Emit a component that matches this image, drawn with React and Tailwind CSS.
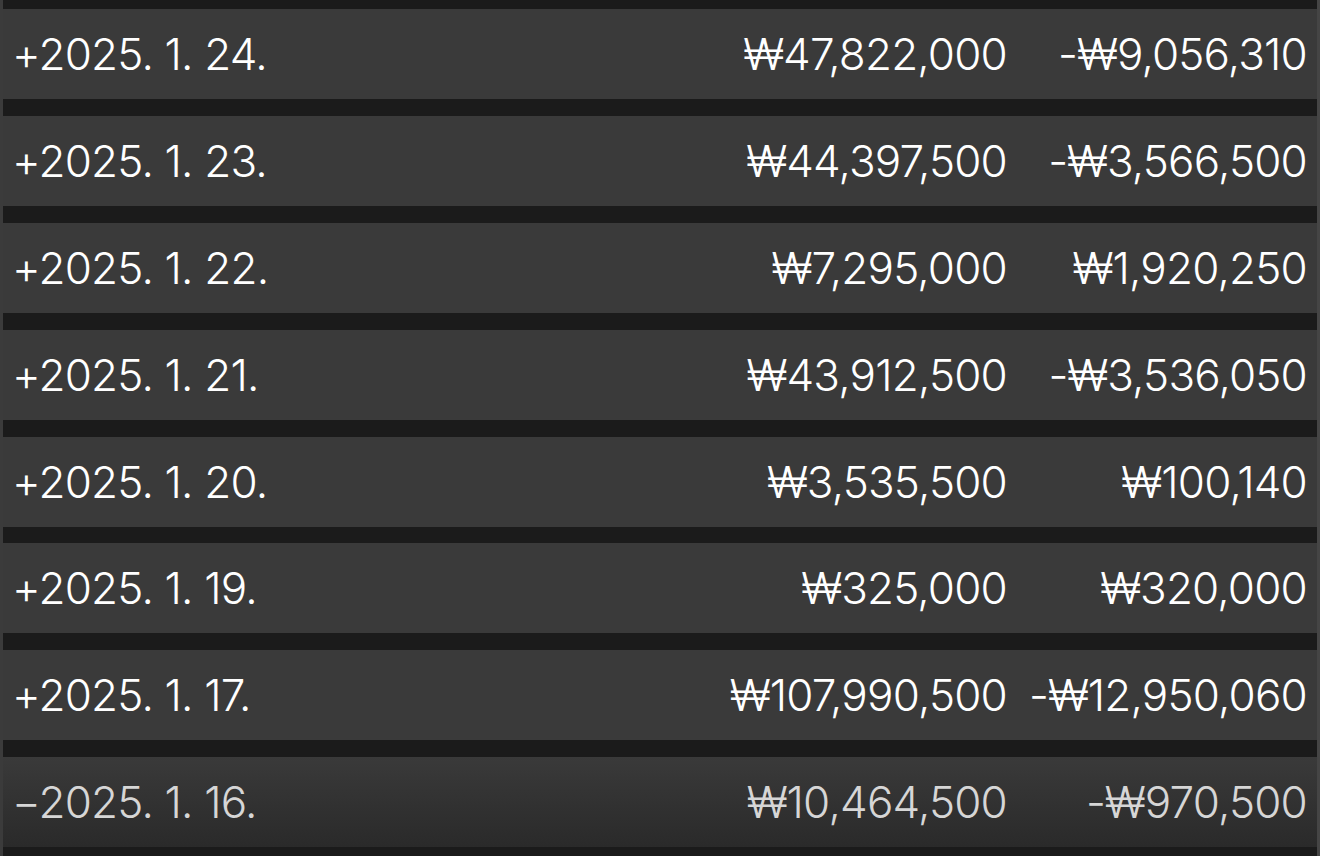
const rows = [
  ["+2025. 1. 24.", "₩47,822,000", "-₩9,056,310"],
  ["+2025. 1. 23.", "₩44,397,500", "-₩3,566,500"],
  ["+2025. 1. 22.", "₩7,295,000", "₩1,920,250"],
  ["+2025. 1. 21.", "₩43,912,500", "-₩3,536,050"],
  ["+2025. 1. 20.", "₩3,535,500", "₩100,140"],
  ["+2025. 1. 19.", "₩325,000", "₩320,000"],
  ["+2025. 1. 17.", "₩107,990,500", "-₩12,950,060"],
  ["−2025. 1. 16.", "₩10,464,500", "-₩970,500"],
];

export default function App() {
  return (
    <div
      className="w-[1320px] h-[856px] overflow-hidden bg-[#1b1b1b] flex"
      style={{ fontFamily: "Inter, 'Noto Sans', sans-serif" }}
    >
      <div className="w-[3px] bg-[#3b3b3b] shrink-0" />
      <div className="flex-1 flex flex-col gap-[16.9px] pt-[9px]">
        {rows.map((r, i) => {
          const last = i === rows.length - 1;
          return (
            <div
              key={i}
              className={
                "h-[90px] shrink-0 flex items-center pl-[9px] pr-[10px] text-[44px] tracking-[-0.8px] font-light " +
                (last
                  ? "bg-gradient-to-b from-[#3a3a3a] to-[#2a2a2a] text-[#d6d6d6]"
                  : "bg-[#3a3a3a] text-white")
              }
            >
              <div className="flex-1">{r[0]}</div>
              <div className="w-[300px] text-right">{r[1]}</div>
              <div className="w-[300px] text-right">{r[2]}</div>
            </div>
          );
        })}
      </div>
      <div className="w-[3px] bg-[#454545] shrink-0" />
    </div>
  );
}
